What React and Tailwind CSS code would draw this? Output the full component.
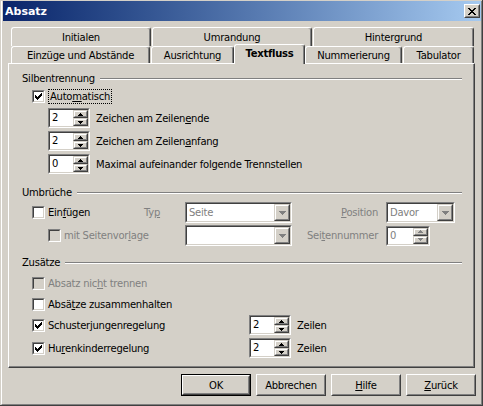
import React from 'react';

const U = ({ children }) => <span className="underline underline-offset-1">{children}</span>;

const Sunken = ({ className = '', inner = 'bg-white', children }) => (
    <div className={`border border-t-[#808080] border-l-[#808080] border-b-white border-r-white ${className}`}>
        <div className={`h-full w-full border border-t-[#404040] border-l-[#404040] border-b-[#d4d0c8] border-r-[#d4d0c8] ${inner}`}>
            {children}
        </div>
    </div>
);

const SmallBtn = ({ className = '', children }) => (
    <div className={`bg-[#d4d0c8] border border-t-[#d4d0c8] border-l-[#d4d0c8] border-b-[#404040] border-r-[#404040] ${className}`}>
        <div className="h-full w-full border border-t-white border-l-white border-b-[#808080] border-r-[#808080] flex items-center justify-center">
            {children}
        </div>
    </div>
);

const CheckMark = () => (
    <svg width="7" height="7" viewBox="0 0 7 7" shapeRendering="crispEdges">
        {[2, 3, 4, 3, 2, 1, 0].map((y, x) => (
            <rect key={x} x={x} y={y} width="1" height="3" fill="#000" />
        ))}
    </svg>
);

const CheckBox = ({ checked, disabled }) => (
    <Sunken
        className="w-[13px] h-[13px] shrink-0"
        inner={`flex items-center justify-center ${disabled ? 'bg-[#d4d0c8]' : 'bg-white'}`}
    >
        {checked && <CheckMark />}
    </Sunken>
);

const SpinArrow = ({ up, color }) => (
    <svg width="5" height="3" viewBox="0 0 5 3" shapeRendering="crispEdges">
        {up
            ? <path d="M2 0h1v1h1v1h1v1H0V2h1V1h1z" fill={color} />
            : <path d="M0 0h5v1H4v1H3v1H2V2H1V1H0z" fill={color} />}
    </svg>
);

const DropArrow = ({ color }) => (
    <svg width="7" height="4" viewBox="0 0 7 4" shapeRendering="crispEdges">
        <path d="M0 0h7v1H6v1H5v1H4v1H3V3H2V2H1V1H0z" fill={color} />
    </svg>
);

const Spin = ({ value, disabled, className = 'w-[42px]' }) => {
    const color = disabled ? '#808080' : '#000';
    return (
        <Sunken className={`h-[20px] shrink-0 ${className}`} inner="bg-white flex">
            <div className={`flex-1 pl-[2px] leading-[16px] ${disabled ? 'text-[#808080]' : 'text-black'}`}>{value}</div>
            <div className="flex flex-col w-[15px]">
                <SmallBtn className="h-[8px] w-full"><SpinArrow up color={color} /></SmallBtn>
                <SmallBtn className="h-[8px] w-full"><SpinArrow color={color} /></SmallBtn>
            </div>
        </Sunken>
    );
};

const Combo = ({ value, className = '' }) => (
    <Sunken className={`h-[21px] shrink-0 ${className}`} inner="bg-white flex">
        <div className="flex-1 pl-[2px] leading-[17px] text-[#808080]">{value}</div>
        <SmallBtn className="w-[16px] h-full"><DropArrow color="#808080" /></SmallBtn>
    </Sunken>
);

const Group = ({ title }) => (
    <div className="flex items-center w-[440px] h-[13px]">
        <span className="whitespace-nowrap">{title}</span>
        <div className="ml-[5px] flex-1 h-[2px] border-t border-t-[#808080] border-b border-b-white" />
    </div>
);

const Tab = ({ className = '', selected, children }) => (
    <div
        className={`flex items-center justify-center whitespace-nowrap bg-[#d4d0c8] border-l border-t border-r border-l-white border-t-white border-r-[#404040] shadow-[inset_-1px_0_#808080] rounded-tl-[3px] rounded-tr-[3px] ${selected ? '-mt-[2px] h-[20px] -mb-px relative z-10 font-bold pb-[2px]' : 'h-full'} ${className}`}
    >
        {children}
    </div>
);

const Button = ({ children, isDefault }) => (
    <div className={`w-[70px] h-[22px] ${isDefault ? 'border border-black' : ''}`}>
        <div className="h-full w-full border border-t-white border-l-white border-b-[#404040] border-r-[#404040]">
            <div className="h-full w-full border border-t-[#d4d0c8] border-l-[#d4d0c8] border-b-[#808080] border-r-[#808080] flex items-center justify-center">
                {children}
            </div>
        </div>
    </div>
);

const CloseX = () => (
    <svg width="8" height="7" viewBox="0 0 8 7" shapeRendering="crispEdges">
        <path d="M0 0h2v1h1v1h2V1h1V0h2v1H7v1H6v1H5v1h1v1h1v1h1v1H6V6H5V5H3v1H2v1H0V6h1V5h1V4h1V3H2V2H1V1H0z" fill="#000" />
    </svg>
);

export default function App() {
    return (
        <div className="w-[483px] h-[406px] bg-[#d4d0c8] pt-px pl-px border-r border-b border-r-[#404040] border-b-[#404040] text-[10px] leading-[13px] tracking-[-0.25px] text-black font-['DejaVu_Sans',Verdana,sans-serif]">
            <div className="h-full flex flex-col border-l border-l-white border-r border-r-[#808080] border-b border-b-[#808080] pl-px">
                {/* title bar */}
                <div className="h-[20px] shrink-0 bg-linear-to-r from-[#0a246a] to-[#a6caf0] flex items-center justify-between pl-[2px] pr-px">
                    <span className="text-white font-bold text-[11px] tracking-normal">Absatz</span>
                    <div className="w-[16px] h-[14px] border border-t-white border-l-white border-b-[#404040] border-r-[#404040] bg-[#d4d0c8]">
                        <div className="h-full w-full border border-t-[#d4d0c8] border-l-[#d4d0c8] border-b-[#808080] border-r-[#808080] flex items-center justify-center">
                            <CloseX />
                        </div>
                    </div>
                </div>

                {/* tabs */}
                <div className="mt-[6px] ml-[8px] flex gap-px h-[19px]">
                    <Tab className="w-[140px]">Initialen</Tab>
                    <Tab className="w-[160px]">Umrandung</Tab>
                    <Tab className="w-[161px]">Hintergrund</Tab>
                </div>
                <div className="ml-[8px] flex items-start h-[17px]">
                    <Tab className="w-[139px]">Einzüge und Abstände</Tab>
                    <Tab className="w-[83px] ml-px">Ausrichtung</Tab>
                    <Tab className="w-[71px]" selected>Textfluss</Tab>
                    <Tab className="w-[97px]">Nummerierung</Tab>
                    <Tab className="w-[71px] ml-px">Tabulator</Tab>
                </div>

                {/* panel */}
                <div className="ml-[5px] w-[467px] h-[305px] shrink-0 border border-t-white border-l-white border-r-[#404040] border-b-[#404040] shadow-[inset_-1px_-1px_#808080] pl-[13px] flex flex-col">
                    <div className="mt-[8px]"><Group title="Silbentrennung" /></div>

                    <div className="mt-[4px] h-[15px] ml-[10px] flex items-center">
                        <CheckBox checked />
                        <span className="ml-[3px] px-px border border-dotted border-black leading-[13px]">Auto<U>m</U>atisch</span>
                    </div>

                    <div className="mt-[4px] ml-[26px] h-[20px] flex items-center">
                        <Spin value="2" />
                        <span className="ml-[6px]">Zeichen am Zeilen<U>e</U>nde</span>
                    </div>
                    <div className="mt-[3px] ml-[26px] h-[20px] flex items-center">
                        <Spin value="2" />
                        <span className="ml-[6px]">Zeichen am Zeilen<U>a</U>nfang</span>
                    </div>
                    <div className="mt-[3px] ml-[26px] h-[20px] flex items-center">
                        <Spin value="0" />
                        <span className="ml-[6px]">Maximal aufeinander folgende Trennstellen</span>
                    </div>

                    <div className="mt-[12px]"><Group title="Umbrüche" /></div>

                    <div className="mt-[3px] h-[21px] flex items-center">
                        <div className="ml-[10px] w-[112px] flex items-center">
                            <CheckBox />
                            <span className="ml-[3px]">Ein<U>f</U>ügen</span>
                        </div>
                        <span className="w-[41px] text-[#808080]">Ty<U>p</U></span>
                        <Combo value="Seite" className="w-[107px]" />
                        <span className="w-[86px] text-right text-[#808080]"><U>P</U>osition</span>
                        <Combo value="Davor" className="ml-[8px] w-[69px]" />
                    </div>
                    <div className="mt-[2px] h-[21px] flex items-center">
                        <div className="ml-[26px] w-[96px] flex items-center">
                            <CheckBox disabled />
                            <span className="ml-[3px] whitespace-nowrap text-[#808080]">mit Seitenvor<U>l</U>age</span>
                        </div>
                        <span className="w-[41px]" />
                        <Combo value="" className="w-[107px]" />
                        <span className="w-[86px] text-right text-[#808080]">Sei<U>t</U>ennummer</span>
                        <Spin value="0" disabled className="ml-[8px] w-[44px]" />
                    </div>

                    <div className="mt-[10px]"><Group title="Zusätze" /></div>

                    <div className="mt-[4px] h-[20px] ml-[10px] flex items-center">
                        <CheckBox disabled />
                        <span className="ml-[3px] text-[#808080]">Absatz nic<U>h</U>t trennen</span>
                    </div>
                    <div className="mt-px h-[20px] ml-[10px] flex items-center">
                        <CheckBox />
                        <span className="ml-[3px]">Absä<U>t</U>ze zusammenhalten</span>
                    </div>
                    <div className="mt-px h-[20px] ml-[10px] flex items-center">
                        <div className="w-[217px] flex items-center">
                            <CheckBox checked />
                            <span className="ml-[3px]">Schuster<U>j</U>ungenregelung</span>
                        </div>
                        <Spin value="2" />
                        <span className="ml-[6px]">Zeilen</span>
                    </div>
                    <div className="mt-[3px] h-[20px] ml-[10px] flex items-center">
                        <div className="w-[217px] flex items-center">
                            <CheckBox checked />
                            <span className="ml-[3px]">Hu<U>r</U>enkinderregelung</span>
                        </div>
                        <Spin value="2" />
                        <span className="ml-[6px]">Zeilen</span>
                    </div>
                </div>

                {/* buttons */}
                <div className="mt-[6px] ml-[178px] flex gap-[5px]">
                    <Button isDefault>OK</Button>
                    <Button>Abbrechen</Button>
                    <Button><U>H</U>ilfe</Button>
                    <Button><U>Z</U>urück</Button>
                </div>
            </div>
        </div>
    );
}
